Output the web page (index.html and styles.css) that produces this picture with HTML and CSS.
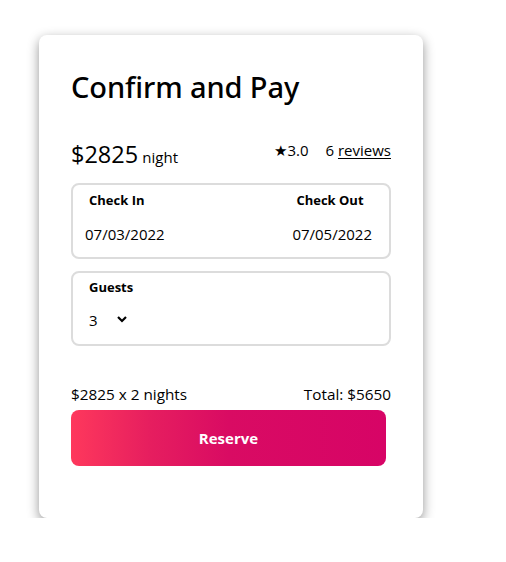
FILE: index.html
```html
<!DOCTYPE html>
<html>
<head>
<meta charset="utf-8">
<link rel="stylesheet" href="styles.css">
</head>
<body>
<div class="card">
  <h1 class="title">Confirm and Pay</h1>
  <div class="price-row">
    <div class="price"><span class="amount">$2825</span> <span class="per">night</span></div>
    <div class="rating"><span>★3.0</span><span class="reviews">6 <u>reviews</u></span></div>
  </div>
  <div class="box dates">
    <div class="col">
      <div class="label">Check In</div>
      <div class="value">07/03/2022</div>
    </div>
    <div class="col right">
      <div class="label">Check Out</div>
      <div class="value">07/05/2022</div>
    </div>
  </div>
  <div class="box guests">
    <div class="label">Guests</div>
    <div class="select"><span>3</span>
      <svg width="12" height="8" viewBox="0 0 12 8"><path d="M2 2 L6 6 L10 2" fill="none" stroke="#000" stroke-width="2.2"/></svg>
    </div>
  </div>
  <div class="summary"><span>$2825 x 2 nights</span><span>Total: $5650</span></div>
  <button class="reserve">Reserve</button>
</div>
</body>
</html>
```
FILE: styles.css
```css
html, body { margin: 0; padding: 0; background: #fff; }
body { font-family: "Open Sans", "Noto Sans", sans-serif; color: #000; }
.card {
  width: 384px;
  height: 483px;
  box-sizing: border-box;
  margin: 35px 0 0 39px;
  padding: 30px 32px 0 32px;
  border-radius: 8px;
  background: #fff;
  box-shadow: 0 4px 12px rgba(0,0,0,0.42);
}
.title {
  margin: 0;
  font-family: "Noto Sans", sans-serif;
  font-size: 29px;
  font-weight: 500;
  line-height: 44px;
  letter-spacing: -0.1px;
}
.price-row {
  margin-top: 32px;
  display: flex;
  justify-content: space-between;
  align-items: flex-start;
  height: 38px;
}
.amount { font-size: 23.5px; }
.per { font-size: 15px; }
.price { line-height: 30px; margin-top: -2px; }
.rating { font-size: 15px; display: flex; gap: 17px; line-height: 18px; }
.rating u { text-underline-offset: 2px; }
.box {
  border: 2px solid #dcdcdc;
  border-radius: 8px;
  box-sizing: border-box;
  width: 320px;
}
.dates {
  margin-top: 4px;
  height: 76px;
  display: flex;
  justify-content: space-between;
  padding: 6px 17px 0 12px;
}
.col .label { margin-left: 4px; }
.label { font-size: 13px; font-weight: 700; line-height: 18px; }
.value { font-size: 15px; margin-top: 15px; line-height: 20px; }
.guests {
  margin-top: 12px;
  height: 75px;
  padding: 5px 16px 0 16px;
}
.select { display: flex; align-items: center; gap: 18px; margin-top: 14px; font-size: 15px; line-height: 20px; }
.select svg { margin-top: -3px; }
.summary {
  margin-top: 38px;
  display: flex;
  justify-content: space-between;
  font-size: 15.3px;
  line-height: 20px;
}
.reserve {
  display: block;
  margin-top: 6px;
  width: 315px;
  height: 56px;
  border: none;
  border-radius: 8px;
  background: linear-gradient(90deg, #fe385c 0%, #e61e5f 25%, #d90b63 50%, #d70466 100%);
  color: #fff;
  font-family: inherit;
  font-weight: 700;
  font-size: 15px;
}
```
